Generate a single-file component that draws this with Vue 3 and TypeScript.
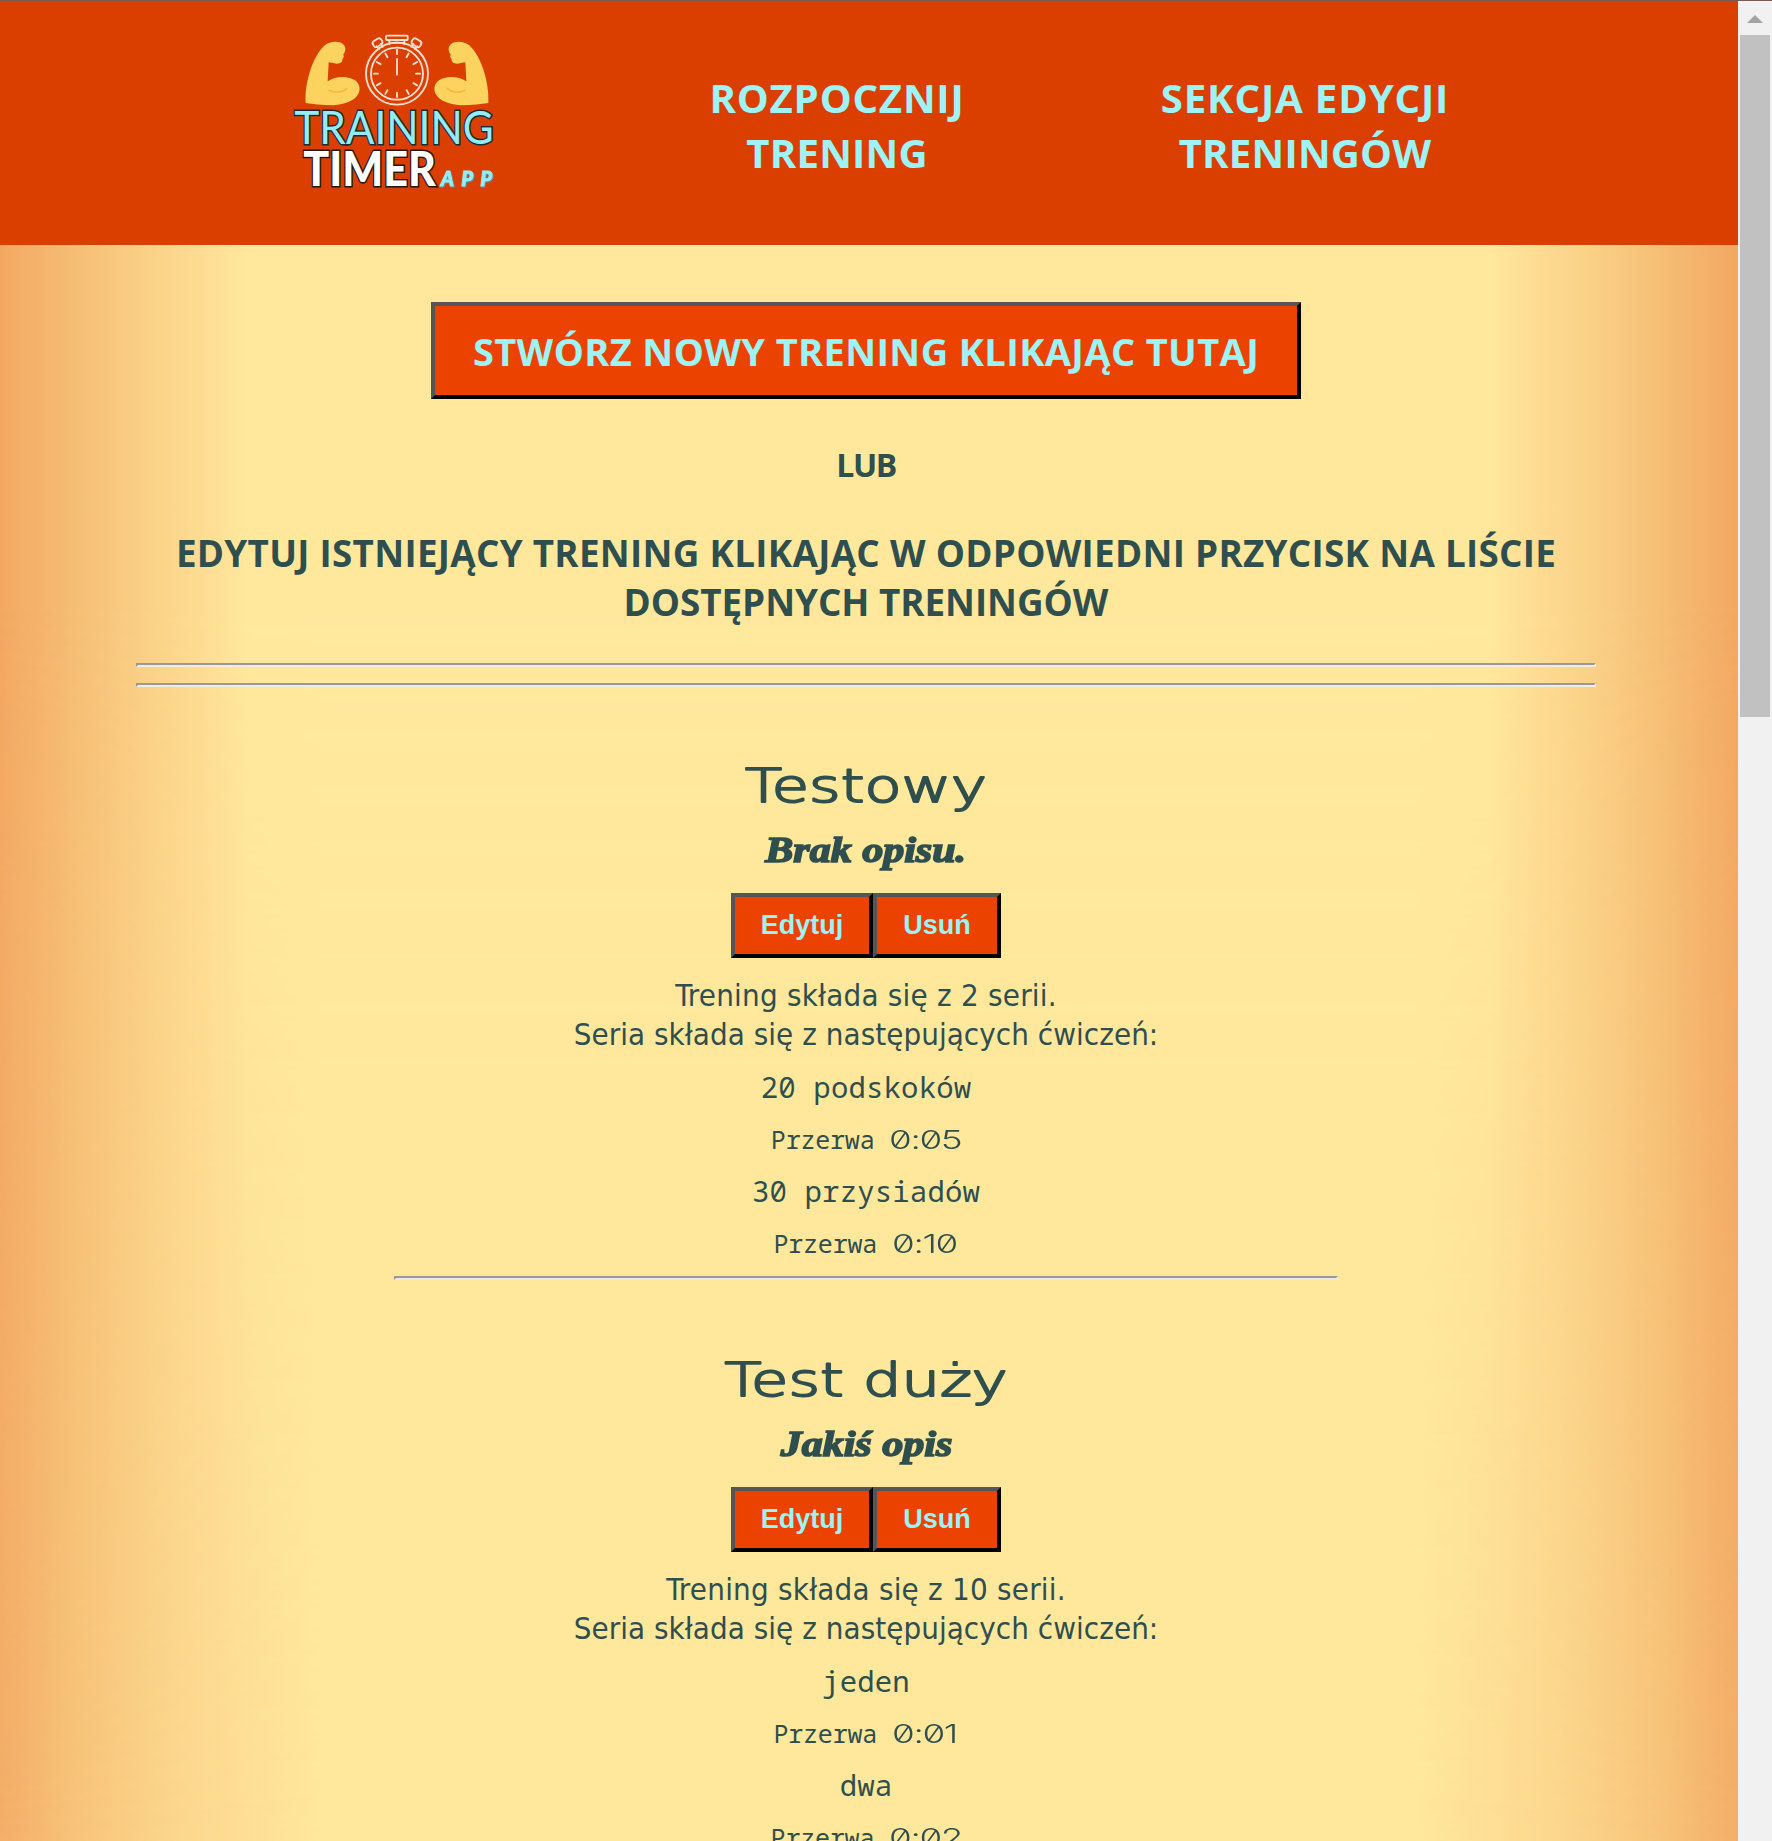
<script setup lang="ts">
interface Exercise {
  name: string
  pause: string
}
interface Training {
  title: string
  description: string
  series: number
  exercises: Exercise[]
}

const navLinks: string[][] = [
  ['ROZPOCZNIJ', 'TRENING'],
  ['SEKCJA EDYCJI', 'TRENINGÓW'],
]

const trainings: Training[] = [
  {
    title: 'Testowy',
    description: 'Brak opisu.',
    series: 2,
    exercises: [
      { name: '20 podskoków', pause: '0:05' },
      { name: '30 przysiadów', pause: '0:10' },
    ],
  },
  {
    title: 'Test duży',
    description: 'Jakiś opis',
    series: 10,
    exercises: [
      { name: 'jeden', pause: '0:01' },
      { name: 'dwa', pause: '0:02' },
    ],
  },
]

const ticks: number[] = Array.from({ length: 11 }, (_, i) => (i + 1) * 30)
</script>

<template>
  <div class="window">
    <div class="page">
      <header class="header">
        <svg class="logo" viewBox="0 0 690 540" role="img">
          <defs>
            <g id="arm">
              <path
                fill="#fbd35e"
                d="M77 249C74 190 96 112 134 76C150 63 174 62 188 71C199 80 198 93 190 103C192 109 191 115 187 118C189 129 174 134 160 129L146 127L143 184C162 171 192 167 216 176C239 185 243 205 235 222C224 242 196 253 160 256Q108 254 77 249Z"
              />
              <path fill="none" stroke="#f7b944" stroke-width="5" stroke-linecap="round" d="M147 211C162 220 187 218 201 205" />
            </g>
          </defs>
          <use href="#arm" />
          <use href="#arm" transform="translate(702 0) scale(-1 1)" />
          <g fill="none" stroke="#ffe0d0" stroke-width="5.5" stroke-linecap="round" stroke-linejoin="round">
            <circle cx="351" cy="161" r="93" />
            <circle cx="351" cy="161" r="78" />
            <rect x="318" y="47" width="65" height="13" rx="2" />
            <path d="M328 60V72M373 60V72M328 71Q350 65 373 71" />
            <rect x="278" y="58" width="29" height="20" rx="8" transform="rotate(-32 293 68)" />
            <rect x="395" y="58" width="29" height="20" rx="8" transform="rotate(32 409 68)" />
            <path d="M290 79L297 87M302 72L308 80M412 79L405 87M400 72L394 80" />
            <path d="M351 89V102M351 117V164" />
            <path v-for="t in ticks" :key="t" d="M351 91V104" :transform="`rotate(${t} 351 161)`" />
          </g>
          <text class="logo-training" x="43" y="372" textLength="598" lengthAdjust="spacingAndGlyphs">TRAINING</text>
          <text class="logo-timer" x="70" y="497" textLength="398" lengthAdjust="spacingAndGlyphs">TIMER</text>
          <text class="logo-app" x="482" y="498">APP</text>
        </svg>
        <nav class="nav">
          <a v-for="link in navLinks" :key="link[0]" class="nav-link">
            <span class="nav-first">{{ link[0] }}</span>
            <span class="nav-second">{{ link[1] }}</span>
          </a>
        </nav>
      </header>

      <main class="main">
        <button class="create">STWÓRZ NOWY TRENING KLIKAJĄC TUTAJ</button>
        <p class="or">LUB</p>
        <h2 class="hint">
          EDYTUJ ISTNIEJĄCY TRENING KLIKAJĄC W ODPOWIEDNI PRZYCISK NA LIŚCIE<br />
          <span class="hint-second">DOSTĘPNYCH TRENINGÓW</span>
        </h2>
        <div class="rule"></div>
        <div class="rule"></div>

        <section v-for="t in trainings" :key="t.title" class="training">
          <svg class="title" viewBox="0 0 400 60">
            <text transform="translate(200 47.5) scale(1.29 1)" text-anchor="middle">{{ t.title }}</text>
          </svg>
          <p class="description"><span>{{ t.description }}</span></p>
          <div class="actions">
            <button class="action edit">Edytuj</button>
            <button class="action remove">Usuń</button>
          </div>
          <p class="summary">
            <span class="count">Trening składa się z {{ t.series }} serii.</span><br />
            Seria składa się z następujących ćwiczeń:
          </p>
          <template v-for="e in t.exercises" :key="e.name">
            <p class="exercise">{{ e.name }}</p>
            <p class="pause">Przerwa <span class="clock">{{ e.pause }}</span></p>
          </template>
          <div class="rule short"></div>
        </section>
      </main>
    </div>
    <div class="scrollbar">
      <span class="arrow"></span>
      <div class="thumb"></div>
    </div>
    <div class="top-edge"></div>
  </div>
</template>

<style>
body {
  margin: 0;
}
</style>

<style scoped>
.window {
  position: relative;
  display: flex;
  width: 1772px;
  height: 1841px;
  overflow: hidden;
}
.page {
  position: relative;
  width: 1738px;
  height: 1841px;
  overflow: hidden;
  color: #2f4f4f;
  background: linear-gradient(90deg, #f4ae68 0, #f8c57b 80px, #fcd78e 180px, #ffe89c 325px, #ffe89c 1413px, #fcd78e 1558px, #f8c57b 1658px, #f4ae68 1738px);
}
/* narrower side shading near the top of the page */
.page::before {
  content: '';
  position: absolute;
  inset: 0;
  background: linear-gradient(90deg, #f3a861 0, #f5b971 60px, #f9cb82 125px, #fddb91 195px, #ffe89c 250px, #ffe89c 1488px, #fddb91 1543px, #f9cb82 1613px, #f5b971 1678px, #f3a861 1738px);
  -webkit-mask-image: linear-gradient(#000 600px, transparent 1841px);
  mask-image: linear-gradient(#000 600px, transparent 1841px);
}
.header {
  position: relative;
  display: flex;
  align-items: flex-start;
  box-sizing: border-box;
  height: 245px;
  padding: 20px 0 0 280px;
  background: #db3f00;
}
.logo {
  width: 230px;
  height: 180px;
}
.logo-training {
  font: 400 138px Lato, sans-serif;
  fill: #93ecf7;
  stroke: #1d2b33;
  stroke-width: 9px;
  paint-order: stroke;
}
.logo-timer {
  font: 900 143px Lato, sans-serif;
  fill: #fff;
  stroke: #2a1512;
  stroke-width: 9px;
  paint-order: stroke;
}
.logo-app {
  font: italic 900 60px Lato, sans-serif;
  letter-spacing: 22px;
  fill: #93ecf7;
  stroke: #93ecf7;
  stroke-width: 3px;
  filter: drop-shadow(3px 3px 0 #5b8f92);
}
.nav {
  display: flex;
  gap: 168px;
  margin: 50px 0 0 177px;
}
.nav-link {
  display: flex;
  flex-direction: column;
  align-items: center;
  width: 300px;
  font: 700 40.2px/55px 'Open Sans', sans-serif;
  color: #9df3f6;
}
.nav-first {
  letter-spacing: 0.8px;
}
.nav-second {
  letter-spacing: 0.2px;
}
.main {
  position: relative;
  display: flex;
  flex-direction: column;
  align-items: center;
  padding: 57px 142px 0 136px;
  text-align: center;
}
.main p,
.main h2 {
  margin: 0;
}
button {
  box-sizing: border-box;
  padding: 0;
  border: 4px outset #000;
  border-color: #555 #000 #000 #555;
  background: #ec4200;
  color: #9df3f6;
}
.create {
  width: 870px;
  height: 97px;
  padding-top: 2px;
  font: 700 38px/87px 'Open Sans', sans-serif;
  letter-spacing: 0.37px;
}
.or {
  margin-top: 44px !important;
  font: 700 32px/43px 'Open Sans', sans-serif;
  letter-spacing: -1.5px;
}
.hint {
  margin-top: 43px !important;
  white-space: nowrap;
  font: 700 36.8px/49px 'Open Sans', sans-serif;
  letter-spacing: 0.29px;
}
.hint-second {
  letter-spacing: -0.04px;
}
.rule {
  box-sizing: border-box;
  width: 1460px;
  height: 4px;
  border: 2px solid;
  border-color: #999 #f2ecdc #f2ecdc #999;
}
.hint + .rule {
  margin: 36px 0 16px;
}
.rule.short {
  width: 944px;
  margin-top: 7px;
  border-color: #999 #eaeaea #eaeaea #999;
}
.training {
  display: flex;
  flex-direction: column;
  align-items: center;
  width: 100%;
  padding-top: 67px;
}
.training + .training {
  padding-top: 68px;
}
.title {
  width: 400px;
  height: 60px;
}
.title text {
  font: 200 47px 'DejaVu Sans', sans-serif;
  fill: #2f4f4f;
  stroke: #2f4f4f;
  stroke-width: 2px;
  stroke-linejoin: round;
}
.description {
  font: italic 700 35px/74px 'Liberation Serif', serif;
  -webkit-text-stroke: 1.6px #2f4f4f;
}
.description span {
  display: inline-block;
  transform: scaleX(1.2);
}
.actions {
  display: flex;
  margin-top: 5px;
}
.action {
  height: 65px;
  font: 700 27px/57px 'Liberation Sans', Arial, sans-serif;
}
.edit {
  width: 142px;
}
.remove {
  width: 128px;
}
.summary {
  padding: 18px 0 7px;
  font: 31px/39px 'DejaVu Sans Condensed', 'DejaVu Sans', sans-serif;
  font-stretch: condensed;
  letter-spacing: 0.05px;
}
.count {
  letter-spacing: 0.22px;
}
.exercise,
.pause {
  height: 52px;
  font: 29px/52px 'Noto Sans Mono', 'DejaVu Sans Mono', monospace;
  letter-spacing: 0.15px;
}
.pause {
  font-size: 25px;
  letter-spacing: -0.2px;
}
.clock {
  display: inline-block;
  margin-right: 21px;
  font: 300 26px/1 Inter, sans-serif;
  font-feature-settings: 'zero';
  letter-spacing: -1px;
  transform: scaleX(1.42);
  transform-origin: left;
}
.scrollbar {
  display: flex;
  flex-direction: column;
  align-items: center;
  width: 34px;
  background: #f1f1f1;
}
.arrow {
  margin: 15px 0 12px;
  border: 8px solid transparent;
  border-top: 0;
  border-bottom-color: #a3a3a3;
}
.thumb {
  width: 30px;
  height: 682px;
  background: #c1c1c1;
}
.top-edge {
  position: absolute;
  top: 0;
  left: 0;
  right: 0;
  height: 1px;
  background: #7a5a50;
}
</style>
